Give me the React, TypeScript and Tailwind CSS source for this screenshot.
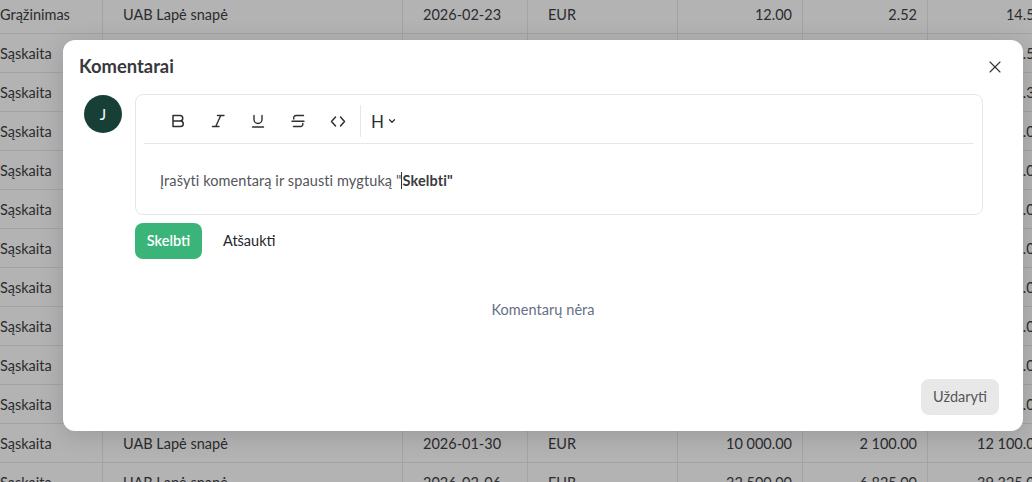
import { ChevronDown, X } from "lucide-react";
import type { ReactNode } from "react";

const font = "font-['Lato','Liberation_Sans',sans-serif]";
const rows: [string, string, string, string, string, string, string][] = [
  ["Grąžinimas", "UAB Lapė snapė", "2026-02-23", "EUR", "12.00", "2.52", "14.52"],
  ["Sąskaita", "UAB Lapė snapė", "2026-02-20", "EUR", "1 500.00", "315.00", "1 815.50"],
  ["Sąskaita", "UAB Lapė snapė", "2026-02-19", "EUR", "2 500.00", "525.00", "3 025.30"],
  ["Sąskaita", "UAB Lapė snapė", "2026-02-18", "EUR", "1 000.00", "210.00", "1 210.00"],
  ["Sąskaita", "UAB Lapė snapė", "2026-02-17", "EUR", "1 000.00", "210.00", "1 210.00"],
  ["Sąskaita", "UAB Lapė snapė", "2026-02-16", "EUR", "1 000.00", "210.00", "1 210.00"],
  ["Sąskaita", "UAB Lapė snapė", "2026-02-13", "EUR", "1 000.00", "210.00", "1 210.00"],
  ["Sąskaita", "UAB Lapė snapė", "2026-02-12", "EUR", "1 000.00", "210.00", "1 210.00"],
  ["Sąskaita", "UAB Lapė snapė", "2026-02-11", "EUR", "1 000.00", "210.00", "1 210.00"],
  ["Sąskaita", "UAB Lapė snapė", "2026-02-10", "EUR", "1 000.00", "210.00", "1 210.00"],
  ["Sąskaita", "UAB Lapė snapė", "2026-02-09", "EUR", "1 000.00", "210.00", "1 210.00"],
  ["Sąskaita", "UAB Lapė snapė", "2026-01-30", "EUR", "10 000.00", "2 100.00", "12 100.00"],
  ["Sąskaita", "UAB Lapė snapė", "2026-02-06", "EUR", "32 500.00", "6 825.00", "39 325.00"],
];

function Tool({ d, w = 1.5 }: { d: string; w?: number }) {
  return (
    <span className="flex w-10 justify-center text-[#2f2f2f]">
      <svg width="16" height="16" viewBox="0 0 16 16" fill="none" stroke="currentColor" strokeWidth={w} strokeLinecap="round" strokeLinejoin="round">
        <path d={d} />
      </svg>
    </span>
  );
}

function Cells({ r }: { r: string[] }): ReactNode {
  const c = "flex h-full shrink-0 items-center pt-[2px]";
  const b = "border-r border-[#a3a3a3]";
  return (
    <>
      <div className={`${c} ${b} w-[103px]`}>{r[0]}</div>
      <div className={`${c} ${b} w-[300px] pl-5`}>{r[1]}</div>
      <div className={`${c} ${b} w-[125px] pl-5`}>{r[2]}</div>
      <div className={`${c} ${b} w-[150px] pl-5`}>{r[3]}</div>
      <div className={`${c} ${b} w-[125px] justify-end pr-[10px]`}>{r[4]}</div>
      <div className={`${c} ${b} w-[125px] justify-end pr-[10px]`}>{r[5]}</div>
      <div className={`${c} w-[115px] justify-end`}>{r[6]}</div>
    </>
  );
}

export default function App() {
  return (
    <div className={`${font} relative h-[482px] w-[1032px] overflow-hidden bg-[#b3b3b3] text-[14.5px] text-[#2b2b30]`}>
      <div className="-mt-[5px] w-[1060px]">
        {rows.map((r, i) => (
          <div key={i} className="flex h-[39px] items-center border-b border-[#a3a3a3]">
            <Cells r={r} />
          </div>
        ))}
      </div>

      <div className="absolute top-[40px] left-[63px] flex h-[391px] w-[960px] flex-col rounded-xl bg-white shadow-[0_4px_24px_rgba(0,0,0,0.15)]">
        <div className="flex h-[54px] items-center justify-between pr-[18px] pl-4">
          <h2 className="text-[18.4px] font-bold text-[#38383d]">Komentarai</h2>
          <X size={20} strokeWidth={1.3} className="text-[#333]" />
        </div>
        <div className="flex gap-[13px] pr-10 pl-[21px]">
          <div className="mt-px flex h-[38px] w-[38px] shrink-0 items-center justify-center rounded-full bg-[#173f35] text-[15px] text-white">J</div>
          <div className="min-w-0 flex-1">
            <div className="h-[121px] rounded-lg border border-[#e7e7e9] px-2">
              <div className="flex h-[49px] items-center border-b border-[#e7e7e9] pt-[4px] pl-[14px]">
                <Tool d="M3 2.5H10a2.75 2.75 0 0 1 0 5.5H3V2.5Z M3 8H10.5a2.75 2.75 0 0 1 0 5.5H3V8Z" />
                <Tool d="M7.5 2.5H14 M2.5 13.5H9 M10.8 2.5L5.7 13.5" w={1.4} />
                <Tool d="M4 2.5V6.5a4 4 0 0 0 8 0V2.5 M2.5 14H13.5" w={1.4} />
                <Tool d="M13.5 2.5H6.2a2.6 2.6 0 0 0-2.4 3.6 M2 8.2H14 M12.8 10.5a2.4 2.4 0 0 1-2.3 3H3.5" w={1.4} />
                <Tool d="M5.5 4L1.5 8.5L5.5 13 M10.5 4L14.5 8.5L10.5 13" />
                <span className="mr-[10px] ml-[2px] h-8 w-px bg-[#e7e7e9]" />
                <span className="flex items-center text-[17px] leading-none text-[#2f2f2f]">
                  H<ChevronDown size={10} strokeWidth={3} className="ml-[3px]" />
                </span>
              </div>
              <p className="pt-[26px] pl-[16px] text-[14.5px] tracking-[0.1px] text-[#55555b]">
                Įrašyti komentarą ir spausti mygtuką "<span className="border-l border-[#333] font-bold text-[#3a3a40]">Skelbti"</span>
              </p>
            </div>
            <div className="mt-2 flex items-center gap-[21px]">
              <button className="h-9 w-[67px] rounded-lg bg-[#3bb47a] text-[14.5px] font-semibold text-white">Skelbti</button>
              <span className="text-[14.5px] text-[#26262b]">Atšaukti</span>
            </div>
          </div>
        </div>
        <p className="mt-[40px] text-center text-[14.5px] tracking-[0.05px] text-[#667085]">Komentarų nėra</p>
        <div className="mt-auto flex justify-end pr-6 pb-[16px]">
          <button className="h-9 w-[78px] rounded-lg bg-[#e8e8e8] text-[14.5px] text-[#55555b]">Uždaryti</button>
        </div>
      </div>
    </div>
  );
}
